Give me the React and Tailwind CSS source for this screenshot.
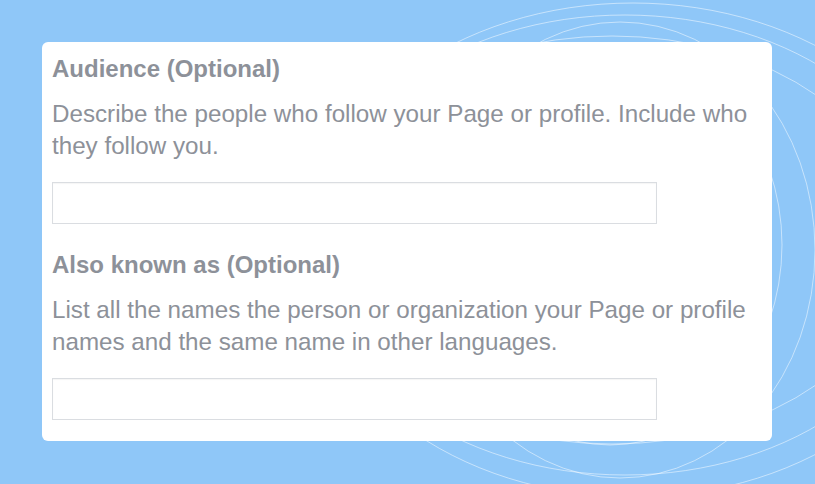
import React from 'react';

const Field = ({ label, description }) => (
  <div className="flex flex-col">
    <h3 className="text-[24px] leading-[32px] font-bold text-[#8d9199]">{label}</h3>
    <p className="mt-[13px] text-[24.2px] leading-[32px] text-[#8d9199] whitespace-nowrap">{description}</p>
    <div className="mt-[20px] h-[42px] w-[605px] border border-[#dadde1] bg-white shadow-[inset_0_1px_1px_rgba(0,0,0,0.04)]" />
  </div>
);

const Rings = () => (
  <svg className="absolute inset-0" width="815" height="484" viewBox="0 0 815 484" fill="none">
    <g stroke="#ffffff" strokeOpacity="0.5" strokeWidth="1">
      <ellipse cx="633" cy="250" rx="325" ry="247" />
      <ellipse cx="625" cy="245" rx="310" ry="230" />
      <ellipse cx="612" cy="240" rx="290" ry="204" />
      <ellipse cx="610" cy="245" rx="172" ry="200" />
      <ellipse cx="620" cy="250" rx="195" ry="228" />
    </g>
  </svg>
);

export default function App() {
  return (
    <div className="relative w-[815px] h-[484px] overflow-hidden bg-[#8fc7f8] font-['Liberation_Sans',Arial,sans-serif]">
      <Rings />
      <div className="relative ml-[42px] mt-[42px] w-[730px] h-[399px] rounded-[6px] bg-white pl-[10px] pt-[11px] flex flex-col">
        <Field
          label="Audience (Optional)"
          description={<>Describe the people who follow your Page or profile. Include who<br />they follow you.</>}
        />
        <div className="mt-[25px]">
          <Field
            label="Also known as (Optional)"
            description={<>List all the names the person or organization your Page or profile<br />names and the same name in other languages.</>}
          />
        </div>
      </div>
    </div>
  );
}
